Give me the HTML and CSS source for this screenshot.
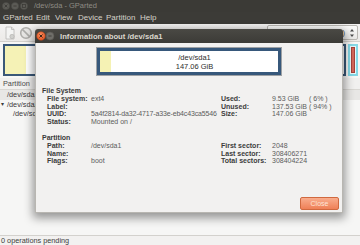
FILE: index.html
```html
<!DOCTYPE html>
<html>
<head>
<meta charset="utf-8">
<title>GParted</title>
<link rel="stylesheet" href="styles.css">
</head>
<body>
<div class="app">
  <div class="titlebar">
    <svg class="wbtns" width="30" height="12" viewBox="0 0 30 12">
      <circle cx="6" cy="6" r="3.6" fill="#5c5b56" stroke="#4a4944" stroke-width="0.6"/>
      <path d="M4.6 4.6 L7.4 7.4 M7.4 4.6 L4.6 7.4" stroke="#3c3b37" stroke-width="0.9"/>
      <circle cx="15" cy="6" r="3.6" fill="#5c5b56" stroke="#4a4944" stroke-width="0.6"/>
      <path d="M13.4 6 H16.6" stroke="#3c3b37" stroke-width="0.9"/>
      <circle cx="24" cy="6" r="3.6" fill="#5c5b56" stroke="#4a4944" stroke-width="0.6"/>
      <rect x="22.5" y="4.5" width="3" height="3" fill="none" stroke="#3c3b37" stroke-width="0.8"/>
    </svg>
    <span class="wtitle">/dev/sda - GParted</span>
  </div>
  <div class="menubar">
    <span class="m1">GParted</span>
    <span class="m2">Edit</span>
    <span class="m3">View</span>
    <span class="m4">Device</span>
    <span class="m5">Partition</span>
    <span>Help</span>
  </div>
  <div class="toolbar">
    <svg class="tool" width="12" height="14" viewBox="0 0 12 14">
      <path d="M2 1 H7.5 L10 3.5 V13 H2 Z" fill="#f4f4f3" stroke="#b9b8b5" stroke-width="0.8"/>
      <path d="M7.5 1 V3.5 H10" fill="none" stroke="#b9b8b5" stroke-width="0.8"/>
      <circle cx="8" cy="10.5" r="2.2" fill="#d0d0cd" stroke="#aaa9a6" stroke-width="0.5"/>
    </svg>
    <svg class="tool t2" width="14" height="14" viewBox="0 0 14 14">
      <circle cx="7" cy="7" r="5.3" fill="#e6e5e3" stroke="#aeadaa" stroke-width="1.6"/>
      <path d="M3.4 3.4 L10.6 10.6" stroke="#aeadaa" stroke-width="1.6"/>
    </svg>
    <div class="tspacer"></div>
    <div class="combo">
      <span class="ctext">/dev/sda  (147.06 GiB)</span>
      <svg width="6" height="10" viewBox="0 0 6 10">
        <path d="M3 1 L5 3.5 H1 Z M3 9 L5 6.5 H1 Z" fill="#4c4c4c"/>
      </svg>
    </div>
  </div>
  <div class="graph">
    <div class="disk main"><div class="fill"></div></div>
    <div class="disk ext"><div class="swap"></div></div>
  </div>
  <div class="tree">
    <div class="thead"><span class="hpart">Partition</span><span class="hflags">Flags</span></div>
    <div class="trow sel"><span class="name">/dev/sda1</span></div>
    <div class="trow"><span class="tri">▾</span><span class="name">/dev/sda2</span></div>
    <div class="trow sub"><span class="name">/dev/sda5</span></div>
  </div>
  <div class="status">0 operations pending</div>
</div>

<div class="dialog">
  <div class="dtitle">
    <svg class="dbtns" width="22" height="14" viewBox="0 0 22 14">
      <defs>
        <radialGradient id="og" cx="0.45" cy="0.35" r="0.7">
          <stop offset="0" stop-color="#f78c5c"/>
          <stop offset="1" stop-color="#e0501e"/>
        </radialGradient>
      </defs>
      <circle cx="6" cy="7" r="4.3" fill="url(#og)" stroke="#b7431b" stroke-width="0.5"/>
      <path d="M4.5 5.5 L7.5 8.5 M7.5 5.5 L4.5 8.5" stroke="#3c2418" stroke-width="1"/>
      <circle cx="15" cy="7" r="4" fill="#6f6e69" stroke="#55544f" stroke-width="0.6"/>
      <path d="M13.4 7 H16.6" stroke="#42413d" stroke-width="1"/>
    </svg>
    <span class="dtext">Information about /dev/sda1</span>
  </div>
  <div class="dbody">
    <div class="pbar">
      <div class="pbar-in">
        <div class="pyel"></div>
        <div class="ptext"><span>/dev/sda1</span><span>147.06 GiB</span></div>
      </div>
    </div>

    <div class="section fs">
      <div class="heading">File System</div>
      <div class="grid">
        <span class="k">File system:</span><span class="v">ext4</span>
        <span class="k">Used:</span><span class="v">9.53 GiB</span><span class="v">( 6% )</span>
        <span class="k">Label:</span><span class="v"></span>
        <span class="k">Unused:</span><span class="v">137.53 GiB</span><span class="v">( 94% )</span>
        <span class="k">UUID:</span><span class="v uuid">5a4f2814-da32-4717-a33e-eb4c43ca5546</span>
        <span class="k">Size:</span><span class="v">147.06 GiB</span><span class="v"></span>
        <span class="k">Status:</span><span class="v">Mounted on /</span>
        <span class="k"></span><span class="v"></span><span class="v"></span>
      </div>
    </div>

    <div class="section pt">
      <div class="heading">Partition</div>
      <div class="grid">
        <span class="k">Path:</span><span class="v">/dev/sda1</span>
        <span class="k">First sector:</span><span class="v">2048</span><span class="v"></span>
        <span class="k">Name:</span><span class="v"></span>
        <span class="k">Last sector:</span><span class="v">308406271</span><span class="v"></span>
        <span class="k">Flags:</span><span class="v">boot</span>
        <span class="k">Total sectors:</span><span class="v">308404224</span><span class="v"></span>
      </div>
    </div>

    <div class="dfoot">
      <button class="close">Close</button>
    </div>
  </div>
</div>
</body>
</html>
```

FILE: styles.css
```css
* { box-sizing: border-box; }
html, body {
  margin: 0;
  padding: 0;
  width: 360px;
  height: 245px;
  overflow: hidden;
  background: #f2f1f0;
  font-family: "Liberation Sans", Arial, sans-serif;
}
.app {
  width: 360px;
  height: 245px;
  display: flex;
  flex-direction: column;
  background: #f2f1f0;
}
.titlebar {
  height: 12px;
  background: #3b3a36;
  display: flex;
  align-items: center;
}
.wbtns { display: block; flex: none; }
.wtitle {
  margin-left: 4px;
  font-size: 7.5px;
  color: #8e8b84;
  line-height: 12px;
}
.menubar {
  height: 12px;
  background: #3c3b37;
  display: flex;
  align-items: center;
  padding-left: 3px;
  font-size: 8px;
  color: #d6d2c9;
  line-height: 12px;
}
.menubar .m1 { width: 33px; }
.menubar .m2 { width: 19px; }
.menubar .m3 { width: 23px; }
.menubar .m4 { width: 28px; }
.menubar .m5 { width: 34px; }
.toolbar {
  height: 18px;
  background: linear-gradient(#f4f3f2, #eceae8);
  border-bottom: 1px solid #d3d1cd;
  display: flex;
  align-items: center;
  padding-left: 4px;
}
.tool { display: block; flex: none; }
.t2 { margin-left: 3px; }
.tspacer { flex: 1; }
.combo {
  width: 91px;
  height: 15px;
  margin-right: 2px;
  border: 1px solid #b9b7b2;
  border-radius: 2px;
  background: linear-gradient(#fbfbfa, #e9e8e6);
  display: flex;
  align-items: center;
  justify-content: flex-end;
  padding-right: 2px;
  font-size: 7.5px;
  color: #3c3c3c;
}
.combo svg { display: block; margin-left: 4px; }
.ctext { white-space: pre; }
.graph {
  height: 36px;
  background: #f7f7f6;
  display: flex;
  padding: 2px 2px 2px 3px;
  gap: 2px;
}
.disk { height: 32px; }
.disk.main {
  width: 343px;
  border: 2px solid #3a5878;
  background: #ffffff;
  display: flex;
}
.disk.main .fill { width: 21px; background: #f5f2b6; }
.disk.ext {
  width: 10px;
  border: 2px solid #84d8e6;
  background: #e6f7fa;
  padding: 1px;
  display: flex;
  justify-content: center;
}
.disk.ext .swap {
  width: 5px;
  background: #d2665a;
  border: 1px solid #a6423a;
}
.tree {
  flex: 1;
  background: #f6f6f5;
  font-size: 7.3px;
  color: #3c3c3c;
}
.thead {
  height: 12px;
  line-height: 12px;
  background: #f1f0ef;
  border-bottom: 1px solid #d9d7d3;
  display: flex;
  color: #4a4a4a;
  white-space: nowrap;
  overflow: hidden;
}
.hpart { padding-left: 3px; width: 322px; flex: none; }
.hflags { flex: none; }
.trow {
  height: 9.5px;
  line-height: 9.5px;
  display: flex;
  padding-left: 7px;
}
.trow.sel { background: #e8e7e5; }
.trow .tri { margin-left: -6px; width: 6px; font-size: 6px; }
.trow.sub { padding-left: 13px; }
.status {
  height: 10px;
  line-height: 10px;
  border-top: 1px solid #d3d1cd;
  font-size: 7.3px;
  color: #3c3c3c;
  padding-left: 1px;
  background: #f2f1f0;
}

/* dialog window (floating over the main window) */
.dialog {
  position: absolute;
  left: 35px;
  top: 29px;
  width: 308px;
  height: 184px;
  display: flex;
  flex-direction: column;
  box-shadow: 0 3px 10px 2px rgba(0, 0, 0, 0.4);
  border-radius: 3px 3px 0 0;
}
.dtitle {
  height: 14px;
  flex: none;
  background: linear-gradient(#4a4944, #3c3b37);
  border-radius: 3px 3px 0 0;
  display: flex;
  align-items: center;
}
.dbtns { display: block; flex: none; }
.dtext {
  margin-left: 3px;
  font-size: 7.7px;
  font-weight: bold;
  color: #dcd8cf;
}
.dbody {
  flex: 1;
  background: #f2f1f0;
  border: 1px solid #b8b6b1;
  border-top: none;
  display: flex;
  flex-direction: column;
  padding: 4px 3px 2px 6px;
}
.pbar {
  align-self: center;
  margin-left: -3px;
  width: 186px;
  height: 29px;
  border: 1px solid #9ea1a4;
  flex: none;
}
.pbar-in {
  height: 100%;
  border: 3px solid #37587b;
  background: #ffffff;
  display: flex;
}
.pyel { width: 11px; background: #f5f2b4; }
.ptext {
  flex: 1;
  display: flex;
  flex-direction: column;
  align-items: center;
  justify-content: center;
  font-size: 7.5px;
  line-height: 9px;
  color: #2e2e2e;
}
.section {
  font-size: 7px;
  line-height: 7.8px;
}
.section.fs { margin-top: 11px; }
.section.pt { margin-top: 8px; }
.heading {
  font-weight: bold;
  color: #3a3a3a;
}
.grid {
  display: grid;
  grid-template-columns: 44px 130px 51px 37px auto;
  padding-left: 5px;
}
.k {
  font-weight: bold;
  color: #3c3c3c;
  white-space: nowrap;
}
.v {
  color: #5c5c5c;
  white-space: nowrap;
  min-height: 7.8px;
}
.v.uuid { letter-spacing: -0.15px; }
.dfoot {
  flex: 1;
  display: flex;
  justify-content: flex-end;
  align-items: flex-end;
}
.close {
  width: 39px;
  height: 13px;
  padding: 0;
  border: 1px solid #d0693f;
  border-radius: 2px;
  background: linear-gradient(#f9ad8d, #ef8057);
  color: #fde4d8;
  font-family: "Liberation Sans", Arial, sans-serif;
  font-size: 7px;
  line-height: 11px;
  text-align: center;
}
```
